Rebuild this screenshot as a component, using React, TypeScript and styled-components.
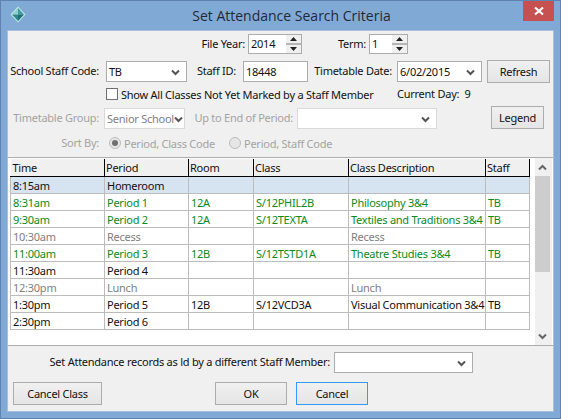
import React from "react"
import styled, { createGlobalStyle } from "styled-components"

const GlobalStyle = createGlobalStyle`
  html, body {
    margin: 0;
    padding: 0;
    background: #81a9d6;
    font-family: "Noto Sans", "Liberation Sans", sans-serif;
    font-size: 11px;
    letter-spacing: -0.25px;
    color: #111;
  }
`

const Dialog = styled.div`
  width: 561px;
  height: 419px;
  box-sizing: border-box;
  border: 1px solid #5f83ad;
  background: #81a9d6;
  display: flex;
  flex-direction: column;
  overflow: hidden;
`

const TitleBar = styled.div`
  height: 30px;
  flex: none;
  display: flex;
  align-items: flex-start;
  position: relative;
`

const AppIcon = styled.svg`
  width: 16px;
  height: 17px;
  margin: 5px 0 0 9px;
`

const Title = styled.div`
  position: absolute;
  left: 22px;
  right: 0;
  top: 4px;
  text-align: center;
  font-family: "Open Sans", "Noto Sans", sans-serif;
  font-size: 14px;
  letter-spacing: 0;
  line-height: 22px;
  color: #1f2a36;
`

const CloseButton = styled.div`
  position: absolute;
  right: 6px;
  top: 0;
  width: 31px;
  height: 20px;
  background: #c75050;
  display: flex;
  align-items: center;
  justify-content: center;
`

const Client = styled.div`
  margin: 0 7px 0 7px;
  height: 380px;
  box-sizing: border-box;
  background: #f0f0f0;
  outline: 1px solid #a9c0dc;
  display: flex;
  flex-direction: column;
`

const Row = styled.div<{ $top: number; $height: number; $align?: string; $left?: number }>`
  display: flex;
  margin-top: ${(p) => p.$top}px;
  padding-left: ${(p) => p.$left ?? 0}px;
  height: ${(p) => p.$height}px;
  align-items: ${(p) => p.$align || "center"};
  flex: none;
`

const Label = styled.div<{ $w: number; $off?: boolean; $gap?: number }>`
  width: ${(p) => p.$w}px;
  margin-right: ${(p) => p.$gap ?? 3}px;
  height: 21px;
  line-height: 20px;
  text-align: right;
  white-space: nowrap;
  color: ${(p) => (p.$off ? "#a3a3a3" : "#111")};
  flex: none;
`

const TextBox = styled.input<{ $w: number; $gap?: number }>`
  width: ${(p) => p.$w}px;
  height: 21px;
  box-sizing: border-box;
  margin: 0 ${(p) => p.$gap ?? 0}px 0 0;
  padding: 0 2px;
  border: 1px solid #acacac;
  background: #fff;
  font: inherit;
  letter-spacing: inherit;
  color: #111;
  outline: none;
`

const Spinner = styled.div<{ $w: number }>`
  width: ${(p) => p.$w}px;
  height: 20px;
  box-sizing: border-box;
  border: 1px solid #acacac;
  background: #fff;
  display: flex;
  flex: none;
`

const SpinnerValue = styled.div`
  flex: 1;
  padding-left: 2px;
  line-height: 18px;
`

const SpinnerArrows = styled.svg`
  width: 15px;
  height: 18px;
  flex: none;
`

const Select = styled.div<{ $w: number; $off?: boolean; $gap?: number }>`
  width: ${(p) => p.$w}px;
  height: 21px;
  box-sizing: border-box;
  margin-right: ${(p) => p.$gap ?? 0}px;
  padding: 0 0 0 2px;
  border: 1px solid ${(p) => (p.$off ? "#d9d9d9" : "#acacac")};
  background: #fff;
  display: flex;
  align-items: center;
  justify-content: space-between;
  color: ${(p) => (p.$off ? "#808080" : "#111")};
  white-space: nowrap;
  flex: none;
`

const Chevron = styled.svg`
  width: 9px;
  height: 7px;
  margin: 1px 6px 0 0;
  flex: none;
`

const Button = styled.button<{ $w: number; $gap?: number; $focus?: boolean }>`
  width: ${(p) => p.$w}px;
  height: 23px;
  margin: 0 ${(p) => p.$gap ?? 0}px 0 0;
  padding: 0;
  box-sizing: border-box;
  border: 1px solid ${(p) => (p.$focus ? "#3399ff" : "#acacac")};
  background: linear-gradient(#f0f0f0, #e5e5e5);
  font: inherit;
  letter-spacing: inherit;
  color: #111;
  flex: none;
`

const Checkbox = styled.div`
  width: 12px;
  height: 12px;
  margin: 0 3px 0 98px;
  box-sizing: border-box;
  border: 1px solid #707070;
  background: #fff;
  flex: none;
`

const CheckText = styled.div`
  width: 276px;
  white-space: nowrap;
  flex: none;
`

const CurrentDay = styled.div`
  margin: -2px 0 0 0;
  white-space: nowrap;
`

const Radio = styled.div<{ $on?: boolean; $left: number }>`
  width: 12px;
  height: 12px;
  margin: 0 3px 0 ${(p) => p.$left}px;
  box-sizing: border-box;
  border: 1px solid #bcbcbc;
  border-radius: 50%;
  background: #e6e6e6;
  display: flex;
  align-items: center;
  justify-content: center;
  flex: none;

  &::after {
    content: "";
    display: ${(p) => (p.$on ? "block" : "none")};
    width: 6px;
    height: 6px;
    border-radius: 50%;
    background: #6f6f6f;
  }
`

const RadioText = styled.div<{ $w?: number }>`
  width: ${(p) => (p.$w ? `${p.$w}px` : "auto")};
  color: #a3a3a3;
  white-space: nowrap;
  flex: none;
`

const GridPanel = styled.div`
  margin-top: 4px;
  height: 189px;
  box-sizing: border-box;
  flex: none;
  border-top: 1px solid #acacac;
  border-bottom: 1px solid #acacac;
  background: #fff;
  display: flex;
  padding: 1px 1px 0 2px;
`

const Grid = styled.table`
  width: 519px;
  table-layout: fixed;
  border-collapse: collapse;
  align-self: flex-start;
  flex: none;
`

const HeadCell = styled.th<{ $w: number }>`
  width: ${(p) => p.$w}px;
  height: 17px;
  box-sizing: border-box;
  padding: 1px 0 0 1px;
  text-align: left;
  font-weight: 400;
  line-height: 16px;
  background: #f0f0f0;
  color: #111;
  white-space: nowrap;
  overflow: hidden;
  border-bottom: 1px solid #000;
  border-right: 1px solid #000;

  &:first-child {
    padding-left: 2px;
  }
`

const GridRow = styled.tr<{ $tone: string; $selected?: boolean }>`
  background: ${(p) => (p.$selected ? "#d6e4f2" : "#fff")};
  color: ${(p) => p.$tone};
`

const Cell = styled.td`
  height: 17px;
  box-sizing: border-box;
  padding: 1px 0 0 2px;
  line-height: 15px;
  white-space: nowrap;
  overflow: hidden;
  border: 1px solid #bcbcbc;
`

const ScrollBar = styled.div`
  width: 17px;
  margin: -1px 0 0 5px;
  height: 187px;
  background: #f0f0f0;
  display: flex;
  flex-direction: column;
  align-items: flex-start;
  flex: none;
`

const ScrollArrow = styled.div<{ $grow?: boolean }>`
  width: 15px;
  height: 18px;
  display: flex;
  align-items: center;
  justify-content: center;
  margin-top: ${(p) => (p.$grow ? "auto" : "0")};
`

const ScrollThumb = styled.div`
  width: 15px;
  height: 96px;
  background: #cdcdcd;
`

const ArrowIcon = styled.svg`
  width: 9px;
  height: 7px;
`

type Slot = {
  time: string
  period: string
  room: string
  code: string
  desc: string
  staff: string
  tone: string
  selected?: boolean
}

const GREEN = "#0b8a1b"
const GREY = "#808080"
const BLACK = "#111"

const columns = [
  { name: "Time", w: 94 },
  { name: "Period", w: 84 },
  { name: "Room", w: 65 },
  { name: "Class", w: 95 },
  { name: "Class Description", w: 137 },
  { name: "Staff", w: 44 },
]

const slots: Slot[] = [
  { time: "8:15am", period: "Homeroom", room: "", code: "", desc: "", staff: "", tone: BLACK, selected: true },
  { time: "8:31am", period: "Period 1", room: "12A", code: "S/12PHIL2B", desc: "Philosophy 3&4", staff: "TB", tone: GREEN },
  { time: "9:30am", period: "Period 2", room: "12A", code: "S/12TEXTA", desc: "Textiles and Traditions 3&4", staff: "TB", tone: GREEN },
  { time: "10:30am", period: "Recess", room: "", code: "", desc: "Recess", staff: "", tone: GREY },
  { time: "11:00am", period: "Period 3", room: "12B", code: "S/12TSTD1A", desc: "Theatre Studies 3&4", staff: "TB", tone: GREEN },
  { time: "11:30am", period: "Period 4", room: "", code: "", desc: "", staff: "", tone: BLACK },
  { time: "12:30pm", period: "Lunch", room: "", code: "", desc: "Lunch", staff: "", tone: GREY },
  { time: "1:30pm", period: "Period 5", room: "12B", code: "S/12VCD3A", desc: "Visual Communication 3&4", staff: "TB", tone: BLACK },
  { time: "2:30pm", period: "Period 6", room: "", code: "", desc: "", staff: "", tone: BLACK },
]

const ChevronDown = () => (
  <Chevron viewBox="0 0 9 7">
    <path d="M1 1.5 L4.5 5 L8 1.5" fill="none" stroke="#555" strokeWidth="2" />
  </Chevron>
)

const Spin = ({ value, w }: { value: string; w: number }) => (
  <Spinner $w={w}>
    <SpinnerValue>{value}</SpinnerValue>
    <SpinnerArrows viewBox="0 0 15 18">
      <rect x="0" y="0" width="15" height="18" fill="#f0f0f0" />
      <rect x="0" y="8" width="15" height="2" fill="#b5b5b5" />
      <path d="M7.5 2 L11 6 L4 6 Z" fill="#222" />
      <path d="M4 12 L11 12 L7.5 16 Z" fill="#222" />
    </SpinnerArrows>
  </Spinner>
)

export default function App() {
  return (
    <>
      <GlobalStyle />
      <Dialog>
        <TitleBar>
          <AppIcon viewBox="0 0 16 17">
            <path d="M8 0.5 L15.5 8.5 L8 16.5 L0.5 8.5 Z" fill="#bfe6e2" />
            <path d="M8 2 L8 8.5 L2 8.5 Z" fill="#8fd0cc" />
            <path d="M8 2 L14 8.5 L8 8.5 Z" fill="#3f9c9c" />
            <path d="M2 8.5 L8 8.5 L8 15 Z" fill="#2f8a8c" />
            <path d="M14 8.5 L8 8.5 L8 15 Z" fill="#1f6f73" />
          </AppIcon>
          <Title>Set Attendance Search Criteria</Title>
          <CloseButton>
            <svg width="10" height="10" viewBox="0 0 10 10">
              <path d="M1 1.5 L9 8.5 M9 1.5 L1 8.5" stroke="#fff" strokeWidth="2.2" />
            </svg>
          </CloseButton>
        </TitleBar>
        <Client>
          <Row $top={3} $height={20}>
            <Label $w={237}>File Year:</Label>
            <Spin value="2014" w={54} />
            <Label $w={64}>Term:</Label>
            <Spin value="1" w={39} />
          </Row>
          <Row $top={6} $height={23}>
            <Label $w={91} $gap={7}>School Staff Code:</Label>
            <Select $w={81}>
              TB
              <ChevronDown />
            </Select>
            <Label $w={49} $gap={7}>Staff ID:</Label>
            <TextBox $w={65} value="18448" readOnly />
            <Label $w={84} $gap={5}>Timetable Date:</Label>
            <Select $w={85} $gap={5}>
              6/02/2015
              <ChevronDown />
            </Select>
            <Button $w={63}>Refresh</Button>
          </Row>
          <Row $top={2} $height={18}>
            <Checkbox />
            <CheckText>Show All Classes Not Yet Marked by a Staff Member</CheckText>
            <CurrentDay>Current Day:&nbsp; 9</CurrentDay>
          </Row>
          <Row $top={3} $height={23} $align="flex-end">
            <Label $w={91} $gap={5} $off>Timetable Group:</Label>
            <Select $w={81} $off>
              Senior School
              <ChevronDown />
            </Select>
            <Label $w={108} $gap={4} $off>Up to End of Period:</Label>
            <Select $w={140} $off $gap={54}>
              <span />
              <ChevronDown />
            </Select>
            <Button $w={53}>Legend</Button>
          </Row>
          <Row $top={4} $height={20}>
            <Label $w={91} $gap={0} $off>Sort By:</Label>
            <Radio $on $left={10} />
            <RadioText $w={105}>Period, Class Code</RadioText>
            <Radio $left={0} />
            <RadioText>Period, Staff Code</RadioText>
          </Row>
          <GridPanel>
            <Grid>
              <thead>
                <tr>
                  {columns.map((c) => (
                    <HeadCell key={c.name} $w={c.w}>{c.name}</HeadCell>
                  ))}
                </tr>
              </thead>
              <tbody>
                {slots.map((s) => (
                  <GridRow key={s.time} $tone={s.tone} $selected={s.selected}>
                    <Cell>{s.time}</Cell>
                    <Cell>{s.period}</Cell>
                    <Cell>{s.room}</Cell>
                    <Cell>{s.code}</Cell>
                    <Cell>{s.desc}</Cell>
                    <Cell>{s.staff}</Cell>
                  </GridRow>
                ))}
              </tbody>
            </Grid>
            <ScrollBar>
              <ScrollArrow>
                <ArrowIcon viewBox="0 0 9 7">
                  <path d="M1 5.5 L4.5 2 L8 5.5" fill="none" stroke="#666" strokeWidth="2" />
                </ArrowIcon>
              </ScrollArrow>
              <ScrollThumb />
              <ScrollArrow $grow>
                <ArrowIcon viewBox="0 0 9 7">
                  <path d="M1 1.5 L4.5 5 L8 1.5" fill="none" stroke="#666" strokeWidth="2" />
                </ArrowIcon>
              </ScrollArrow>
            </ScrollBar>
          </GridPanel>
          <Row $top={6} $height={21}>
            <Label $w={322} $gap={4}>Set Attendance records as ld by a different Staff Member:</Label>
            <Select $w={139}>
              <span />
              <ChevronDown />
            </Select>
          </Row>
          <Row $top={9} $height={23} $left={5}>
            <Button $w={89} $gap={113}>Cancel Class</Button>
            <Button $w={72} $gap={9}>OK</Button>
            <Button $w={72} $focus>Cancel</Button>
          </Row>
        </Client>
      </Dialog>
    </>
  )
}
